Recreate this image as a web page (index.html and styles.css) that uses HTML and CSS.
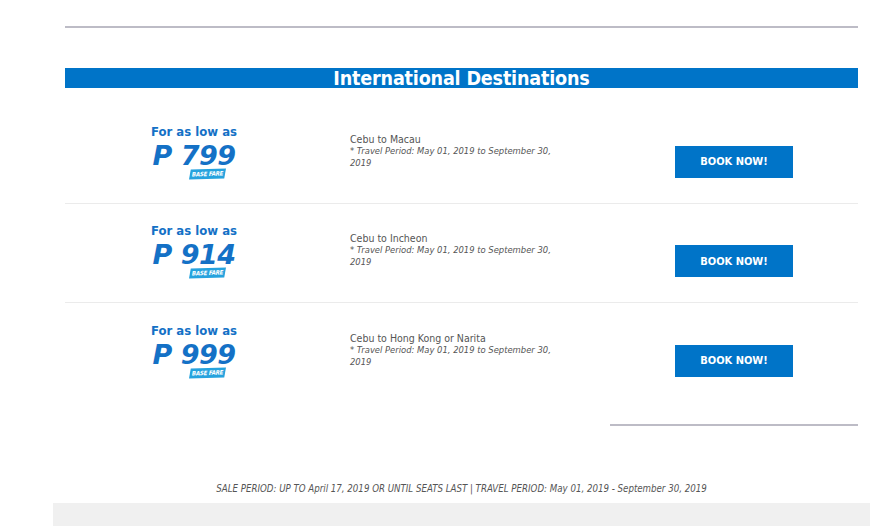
FILE: index.html
```html
<!DOCTYPE html>
<html>
<head>
<meta charset="utf-8">
<link rel="stylesheet" href="styles.css">
</head>
<body>
<div class="page">
  <hr class="topline">
  <div class="banner">International Destinations</div>
  <div class="rows">
    <div class="row first">
      <div class="price">
        <div class="lead">For as low as</div>
        <div class="amount">P 799</div>
        <div class="badge"><span>BASE FARE</span></div>
      </div>
      <div class="info">
        <div class="route">Cebu to Macau</div>
        <div class="period">* Travel Period: May 01, 2019 to September 30, 2019</div>
      </div>
      <div class="action"><a class="book">BOOK NOW!</a></div>
    </div>
    <div class="row">
      <div class="price">
        <div class="lead">For as low as</div>
        <div class="amount">P 914</div>
        <div class="badge"><span>BASE FARE</span></div>
      </div>
      <div class="info">
        <div class="route">Cebu to Incheon</div>
        <div class="period">* Travel Period: May 01, 2019 to September 30, 2019</div>
      </div>
      <div class="action"><a class="book">BOOK NOW!</a></div>
    </div>
    <div class="row last">
      <div class="price">
        <div class="lead">For as low as</div>
        <div class="amount">P 999</div>
        <div class="badge"><span>BASE FARE</span></div>
      </div>
      <div class="info">
        <div class="route">Cebu to Hong Kong or Narita</div>
        <div class="period">* Travel Period: May 01, 2019 to September 30, 2019</div>
      </div>
      <div class="action"><a class="book">BOOK NOW!</a></div>
    </div>
  </div>
  <div class="endline-wrap"><div class="endline"></div></div>
  <div class="footnote">SALE PERIOD: UP TO April 17, 2019 OR UNTIL SEATS LAST | TRAVEL PERIOD: May 01, 2019 - September 30, 2019</div>
</div>
<div class="footer-block"></div>
</body>
</html>
```
FILE: styles.css
```css
html, body { margin: 0; padding: 0; background: #fff; }
body { font-family: "DejaVu Sans", Verdana, sans-serif; overflow: hidden; }
.page { width: 793px; margin-left: 65px; padding-top: 26px; }
.topline { margin: 0; border: 0; height: 2px; background: #bdbcc6; }
.banner {
  margin-top: 40px;
  height: 20px;
  background: #0074c8;
  color: #fff;
  font-family: "DejaVu Sans Condensed", "DejaVu Sans", sans-serif;
  font-weight: bold;
  font-size: 19.6px;
  line-height: 22px;
  text-align: center;
  letter-spacing: -0.2px;
}
.rows { display: flex; flex-direction: column; }
.row {
  display: grid;
  grid-template-columns: 256px 289px 248px;
  box-sizing: border-box;
  height: 99px;
  align-items: center;
  border-bottom: 1px solid #ebebeb;
}
.row.first { height: 116px; padding-top: 16px; }
.row.last { border-bottom: 0; }
.price {
  display: flex; flex-direction: column; align-items: center;
  color: #1471c6;
  padding-left: 2px;
}
.lead {
  font-family: "DejaVu Sans Condensed", "DejaVu Sans", sans-serif;
  font-weight: bold; font-size: 13px; line-height: 15px;
  margin-bottom: 4px;
  margin-top: -5px;
}
.amount {
  font-family: "DejaVu Sans", sans-serif;
  font-weight: bold; font-style: italic; font-size: 27px; line-height: 26px;
  letter-spacing: -0.5px;
}
.badge {
  align-self: flex-start;
  margin-left: 123px;
  margin-top: 0;
  background: #26a3de;
  transform: skewX(-12deg) rotate(-2deg);
  padding: 1px 2px;
  line-height: 8px;
}
.badge span {
  display: block;
  color: #fff;
  font-family: "DejaVu Sans Condensed", sans-serif;
  font-weight: bold; font-size: 6px;
  letter-spacing: -0.2px;
}
.info { padding-left: 29px; padding-right: 50px; padding-bottom: 6px; color: #555; }
.route { font-size: 10.5px; line-height: 12px; font-family: "DejaVu Sans Condensed", "DejaVu Sans", sans-serif; }
.period { font-size: 9.35px; line-height: 12px; font-style: italic; font-family: "DejaVu Sans Condensed", "DejaVu Sans", sans-serif; }
.action { display: flex; justify-content: center; padding-top: 16px; }
.book {
  display: flex; align-items: center; justify-content: center;
  width: 118px; height: 32px;
  background: #0074c8;
  color: #fff;
  font-weight: bold; font-size: 11px;
  font-family: "DejaVu Sans Condensed", "DejaVu Sans", sans-serif;
}
.endline-wrap { display: flex; justify-content: flex-end; margin-top: 22px; }
.endline { width: 248px; height: 2px; background: #bdbcc6; }
.footnote {
  margin-top: 57px;
  text-align: center;
  font-size: 9.65px;
  line-height: 12px;
  font-style: italic;
  color: #555;
  font-family: "DejaVu Sans Condensed", "DejaVu Sans", sans-serif;
}
.footer-block { margin: 8px 0 0 53px; width: 817px; height: 30px; background: #f0f0f0; }
```
